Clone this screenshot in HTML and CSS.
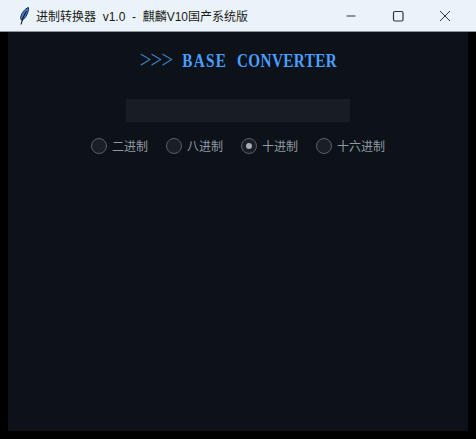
FILE: index.html
```html
<!DOCTYPE html>
<html lang="en">
<head>
  <meta charset="UTF-8" />
  <title>进制转换器</title>
  <link rel="stylesheet" href="styles.css">
</head>
<body>
  <div class="titlebar">
    <svg class="app-icon" width="16" height="20" viewBox="0 0 16 20">
      <path d="M12.5 1.5C9 2.5 5.5 7 4.8 11c-.3 1.8.2 3 1.2 3.4C9.5 12.5 13 6 12.5 1.5z" fill="#3f7fd6" stroke="#1d2a44" stroke-width="1"/>
      <path d="M10.5 5C8.5 8 6.5 12 5 18.5" fill="none" stroke="#10151f" stroke-width="1.1"/>
    </svg>
    <span class="title-text">进制转换器&nbsp; v1.0&nbsp; -&nbsp; 麒麟V10国产系统版</span>
    <div class="window-btns">
      <svg width="12" height="12" viewBox="0 0 12 12"><path d="M1.5 6H10.5" stroke="#333" stroke-width="1"/></svg>
      <svg width="12" height="12" viewBox="0 0 12 12"><rect x="1.5" y="1.5" width="9.5" height="9.5" rx="1.5" fill="none" stroke="#333" stroke-width="1.2"/></svg>
      <svg width="12" height="12" viewBox="0 0 12 12"><path d="M1 1L11 11M11 1L1 11" stroke="#333" stroke-width="1"/></svg>
    </div>
  </div>
  <div class="frame">
    <main class="content">
      <h1 class="heading"><span class="arrows">&gt;&gt;&gt;</span> <span class="base-word">BASE</span> CONVERTER</h1>
      <div class="number-input"></div>
      <div class="radio-row">
        <label class="radio"><span class="dot"></span><span class="label">二进制</span></label>
        <label class="radio"><span class="dot"></span><span class="label">八进制</span></label>
        <label class="radio selected"><span class="dot"></span><span class="label">十进制</span></label>
        <label class="radio"><span class="dot"></span><span class="label">十六进制</span></label>
      </div>
    </main>
  </div>
</body>
</html>
```

FILE: styles.css
```css
* {
  box-sizing: border-box;
  margin: 0;
  padding: 0;
}
html, body {
  height: 100%;
}
body {
  width: 476px;
  height: 439px;
  overflow: hidden;
  background: #000;
  font-family: "Noto Sans CJK SC", "Liberation Sans", sans-serif;
  display: flex;
  flex-direction: column;
}
.titlebar {
  height: 32px;
  flex-shrink: 0;
  background: #eaf3f9;
  border-bottom: 1px solid #8d9499;
  display: flex;
  align-items: center;
  padding-left: 16px;
}
.app-icon {
  margin-right: 4px;
}
.title-text {
  font-family: "Liberation Sans", "Noto Sans CJK SC", sans-serif;
  font-size: 12px;
  color: #1a1a1a;
  white-space: nowrap;
}
.window-btns {
  margin-left: auto;
  display: flex;
  gap: 35px;
  padding-right: 25px;
}
.frame {
  flex: 1;
  padding: 0 8px 8px;
  display: flex;
}
.content {
  flex: 1;
  background: #0d1118;
  display: flex;
  flex-direction: column;
  align-items: center;
}
.heading {
  margin-top: 17px;
  margin-left: 1px;
  height: 22px;
  font-family: "Liberation Serif", serif;
  font-size: 19px;
  font-weight: bold;
  line-height: 22px;
  letter-spacing: 0.5px;
  word-spacing: 7px;
  color: #4a9eff;
  white-space: pre;
  transform: scaleX(0.8);
}
.arrows {
  font-size: 26px;
  line-height: 22px;
  font-weight: normal;
  letter-spacing: -1px;
  color: #3d87c9;
  vertical-align: -1px;
}
.base-word {
  letter-spacing: 1.6px;
}
.number-input {
  margin-top: 28px;
  width: 224px;
  height: 23px;
  background: #171c25;
}
.radio-row {
  margin-top: 15px;
  display: flex;
  gap: 18px;
}
.radio {
  display: flex;
  align-items: center;
  gap: 5px;
}
.dot {
  width: 16px;
  height: 16px;
  border-radius: 50%;
  border: 1px solid #5b6067;
  background: #1a1e25;
  display: flex;
  align-items: center;
  justify-content: center;
}
.selected .dot::after {
  content: "";
  width: 6px;
  height: 6px;
  border-radius: 50%;
  background: #a9adb3;
}
.label {
  font-size: 12px;
  line-height: 18px;
  color: #8f9aa6;
}
```
